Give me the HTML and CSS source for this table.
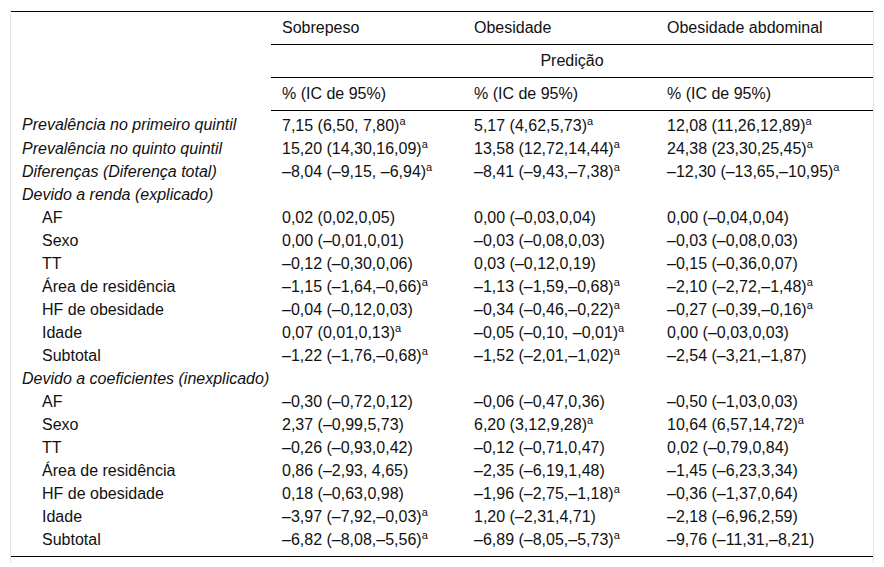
FILE: index.html
```html
<!DOCTYPE html>
<html lang="pt">
<head>
<meta charset="utf-8">
<title>Tabela</title>
<link rel="stylesheet" href="styles.css">
</head>
<body>
<div class="frame">
<table class="tbl">
<colgroup>
<col class="c1"><col class="c2"><col class="c3"><col class="c4">
</colgroup>
<thead>
<tr class="h1">
<th rowspan="3" class="blank"></th>
<th>Sobrepeso</th><th>Obesidade</th><th>Obesidade abdominal</th>
</tr>
<tr class="h2"><th colspan="3" class="center">Predição</th></tr>
<tr class="h3"><th>% (IC de 95%)</th><th>% (IC de 95%)</th><th>% (IC de 95%)</th></tr>
</thead>
<tbody>
<tr class="first"><td class="it">Prevalência no primeiro quintil</td><td>7,15 (6,50, 7,80)<sup>a</sup></td><td>5,17 (4,62,5,73)<sup>a</sup></td><td>12,08 (11,26,12,89)<sup>a</sup></td></tr>
<tr><td class="it">Prevalência no quinto quintil</td><td>15,20 (14,30,16,09)<sup>a</sup></td><td>13,58 (12,72,14,44)<sup>a</sup></td><td>24,38 (23,30,25,45)<sup>a</sup></td></tr>
<tr><td class="it">Diferenças (Diferença total)</td><td>–8,04 (–9,15, –6,94)<sup>a</sup></td><td>–8,41 (–9,43,–7,38)<sup>a</sup></td><td>–12,30 (–13,65,–10,95)<sup>a</sup></td></tr>
<tr><td class="it">Devido a renda (explicado)</td><td></td><td></td><td></td></tr>
<tr><td class="ind">AF</td><td>0,02 (0,02,0,05)</td><td>0,00 (–0,03,0,04)</td><td>0,00 (–0,04,0,04)</td></tr>
<tr><td class="ind">Sexo</td><td>0,00 (–0,01,0,01)</td><td>–0,03 (–0,08,0,03)</td><td>–0,03 (–0,08,0,03)</td></tr>
<tr><td class="ind">TT</td><td>–0,12 (–0,30,0,06)</td><td>0,03 (–0,12,0,19)</td><td>–0,15 (–0,36,0,07)</td></tr>
<tr><td class="ind">Área de residência</td><td>–1,15 (–1,64,–0,66)<sup>a</sup></td><td>–1,13 (–1,59,–0,68)<sup>a</sup></td><td>–2,10 (–2,72,–1,48)<sup>a</sup></td></tr>
<tr><td class="ind">HF de obesidade</td><td>–0,04 (–0,12,0,03)</td><td>–0,34 (–0,46,–0,22)<sup>a</sup></td><td>–0,27 (–0,39,–0,16)<sup>a</sup></td></tr>
<tr><td class="ind">Idade</td><td>0,07 (0,01,0,13)<sup>a</sup></td><td>–0,05 (–0,10, –0,01)<sup>a</sup></td><td>0,00 (–0,03,0,03)</td></tr>
<tr><td class="ind">Subtotal</td><td>–1,22 (–1,76,–0,68)<sup>a</sup></td><td>–1,52 (–2,01,–1,02)<sup>a</sup></td><td>–2,54 (–3,21,–1,87)</td></tr>
<tr><td class="it">Devido a coeficientes (inexplicado)</td><td></td><td></td><td></td></tr>
<tr><td class="ind">AF</td><td>–0,30 (–0,72,0,12)</td><td>–0,06 (–0,47,0,36)</td><td>–0,50 (–1,03,0,03)</td></tr>
<tr><td class="ind">Sexo</td><td>2,37 (–0,99,5,73)</td><td>6,20 (3,12,9,28)<sup>a</sup></td><td>10,64 (6,57,14,72)<sup>a</sup></td></tr>
<tr><td class="ind">TT</td><td>–0,26 (–0,93,0,42)</td><td>–0,12 (–0,71,0,47)</td><td>0,02 (–0,79,0,84)</td></tr>
<tr><td class="ind">Área de residência</td><td>0,86 (–2,93, 4,65)</td><td>–2,35 (–6,19,1,48)</td><td>–1,45 (–6,23,3,34)</td></tr>
<tr><td class="ind">HF de obesidade</td><td>0,18 (–0,63,0,98)</td><td>–1,96 (–2,75,–1,18)<sup>a</sup></td><td>–0,36 (–1,37,0,64)</td></tr>
<tr><td class="ind">Idade</td><td>–3,97 (–7,92,–0,03)<sup>a</sup></td><td>1,20 (–2,31,4,71)</td><td>–2,18 (–6,96,2,59)</td></tr>
<tr class="last"><td class="ind">Subtotal</td><td>–6,82 (–8,08,–5,56)<sup>a</sup></td><td>–6,89 (–8,05,–5,73)<sup>a</sup></td><td>–9,76 (–11,31,–8,21)</td></tr>
</tbody>
</table>
</div>
</body>
</html>
```
FILE: styles.css
```css
html, body {
  margin: 0;
  padding: 0;
  background: #fff;
}
body {
  font-family: "Liberation Sans", Arial, sans-serif;
  font-size: 16px;
  color: #111;
}
.frame {
  margin: 10px 10px 0 10px;
  padding: 1px 0 6px 0;
  border-left: 1px solid #e4e4e4;
  border-right: 1px solid #e4e4e4;
}
.tbl {
  width: 100%;
  table-layout: fixed;
  border-collapse: collapse;
  border-top: 1px solid #000;
  border-bottom: 1px solid #000;
}
.c1 { width: 260px; }
.c2 { width: 192px; }
.c3 { width: 193px; }
.c4 { width: 217px; }
th, td {
  text-align: left;
  font-weight: normal;
  padding: 0 11px;
  vertical-align: middle;
  white-space: nowrap;
}
thead th {
  height: 32px;
  line-height: 18px;
}
.h1 th:not(.blank), .h2 th, .h3 th {
  border-bottom: 1px solid #000;
}
.center { text-align: center; }
tbody td {
  height: 23px;
  line-height: 18px;
  padding-top: 0;
  padding-bottom: 0;
}
tbody tr.first td {
  padding-top: 3px;
}
tbody tr.last td {
  padding-bottom: 5px;
}
.it { font-style: italic; }
.ind { padding-left: 31px; }
sup {
  font-size: 11px;
  line-height: 0;
  vertical-align: 6px;
}
```
